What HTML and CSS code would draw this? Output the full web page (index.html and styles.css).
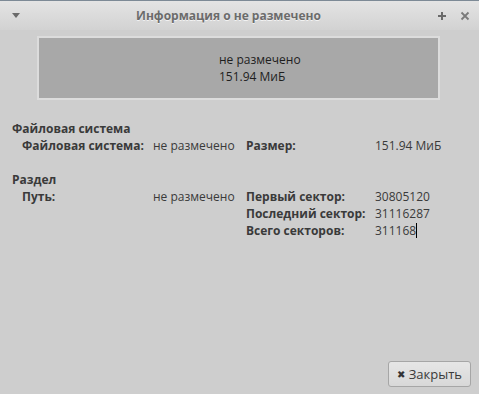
FILE: index.html
```html
<!DOCTYPE html>
<html lang="ru">
<head>
    <meta charset="UTF-8">
    <title>Информация о не размечено</title>
    <link rel="stylesheet" href="styles.css">
</head>
<body>
    <!-- Заголовок окна -->
    <div class="titlebar">
        <span class="menu-arrow"></span>
        <span class="title">Информация о не размечено</span>
        <span class="win-buttons">
            <svg width="10" height="10" viewBox="0 0 10 10"><path d="M5 1v8M1 5h8" stroke="#6a6a6a" stroke-width="2"/></svg>
            <svg width="10" height="10" viewBox="0 0 10 10"><path d="M1.5 1.5l7 7M8.5 1.5l-7 7" stroke="#7a7a7a" stroke-width="1.8"/></svg>
        </span>
    </div>

    <div class="content">
        <div class="partition-box">
            <div>не размечено</div>
            <div>151.94 МиБ</div>
        </div>

        <div class="section-title first">Файловая система</div>
        <div class="info-grid">
            <span class="label">Файловая система:</span>
            <span>не размечено</span>
            <span class="label">Размер:</span>
            <span>151.94 МиБ</span>
        </div>

        <div class="section-title">Раздел</div>
        <div class="info-grid">
            <span class="label">Путь:</span>
            <span>не размечено</span>
            <span class="label">Первый сектор:</span>
            <span>30805120</span>
            <span></span>
            <span></span>
            <span class="label">Последний сектор:</span>
            <span>31116287</span>
            <span></span>
            <span></span>
            <span class="label">Всего секторов:</span>
            <span>311168<span class="cursor"></span></span>
        </div>
    </div>

    <div class="footer">
        <button class="close-btn"><span class="x-icon">✖</span>Закрыть</button>
    </div>
</body>
</html>
```

FILE: styles.css
```css
body {
    margin: 0;
    width: 479px;
    height: 394px;
    background-color: #cecece;
    font-family: "Open Sans", sans-serif;
    font-size: 12px;
    color: #3a3a3a;
    display: flex;
    flex-direction: column;
    overflow: hidden;
}

.titlebar {
    height: 29px;
    border-top: 1px solid #7d8a96;
    background: linear-gradient(#e4e4e4, #d2d2d2);
    display: flex;
    align-items: center;
    padding: 0 9px 0 12px;
}

.menu-arrow {
    width: 0;
    height: 0;
    border-left: 4px solid transparent;
    border-right: 4px solid transparent;
    border-top: 5px solid #6a6a6a;
}

.title {
    flex-grow: 1;
    text-align: center;
    font-weight: bold;
    font-size: 12px;
    color: #6b6b6b;
    text-shadow: 0 1px 0 #f2f2f2;
}

.win-buttons {
    display: flex;
    gap: 13px;
    padding-top: 1px;
}

.content {
    flex-grow: 1;
    padding: 6px 12px 0 12px;
}

.partition-box {
    margin: 0 27px 0 25px;
    height: 60px;
    background-color: #a8a8a8;
    border: 2px solid #dcdcdc;
    color: #1e1e1e;
    display: flex;
    flex-direction: column;
    justify-content: center;
    padding-left: 180px;
    line-height: 17px;
}

.section-title {
    font-weight: bold;
    margin-top: 17px;
    line-height: 17px;
}

.section-title.first {
    margin-top: 20px;
}

.info-grid {
    display: grid;
    grid-template-columns: 131px 93px 129px auto;
    padding-left: 10px;
    line-height: 17px;
}

.label {
    font-weight: bold;
}

.cursor {
    display: inline-block;
    width: 1px;
    height: 15px;
    background-color: #000;
    vertical-align: -3px;
}

.footer {
    display: flex;
    justify-content: flex-end;
    padding: 0 8px 7px 0;
}

.close-btn {
    font-family: "Open Sans", sans-serif;
    font-size: 13px;
    color: #3a3a3a;
    height: 26px;
    padding: 0 8px;
    border: 1px solid #a6a6a6;
    border-radius: 3px;
    background: linear-gradient(#e6e6e6, #d8d8d8);
    display: flex;
    align-items: center;
    gap: 4px;
}

.x-icon {
    font-size: 10px;
    color: #333;
}
```
